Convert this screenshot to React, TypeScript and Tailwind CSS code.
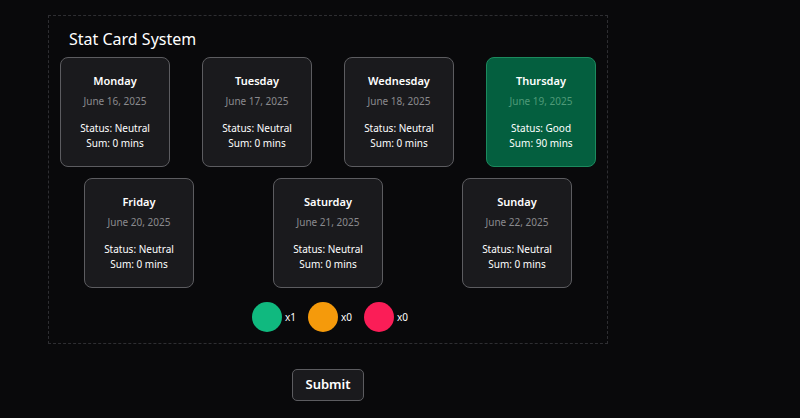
const days = [
  { name: "Monday", date: "June 16, 2025", status: "Neutral", sum: 0 },
  { name: "Tuesday", date: "June 17, 2025", status: "Neutral", sum: 0 },
  { name: "Wednesday", date: "June 18, 2025", status: "Neutral", sum: 0 },
  { name: "Thursday", date: "June 19, 2025", status: "Good", sum: 90 },
  { name: "Friday", date: "June 20, 2025", status: "Neutral", sum: 0 },
  { name: "Saturday", date: "June 21, 2025", status: "Neutral", sum: 0 },
  { name: "Sunday", date: "June 22, 2025", status: "Neutral", sum: 0 },
];

type Day = (typeof days)[number];

const StatCard = ({ day }: { day: Day }) => {
  const good = day.status === "Good";
  return (
    <div
      className={
        good
          ? "w-[110px] h-[110px] rounded-[8px] border border-[#1c8a5e] bg-[#045f3f] flex flex-col items-center pt-[15px] text-center"
          : "w-[110px] h-[110px] rounded-[8px] border border-[#5c5c60] bg-[#1a1a1d] flex flex-col items-center pt-[15px] text-center"
      }
    >
      <div className="text-[11px] font-semibold text-white leading-[16px]">{day.name}</div>
      <div className={good ? "text-[10px] text-[#4f9a78] mt-[4px] leading-[16px]" : "text-[10px] text-[#8a8a8e] mt-[4px] leading-[16px]"}>
        {day.date}
      </div>
      <div className="text-[10px] text-white mt-[12px] leading-[15px]">Status: {day.status}</div>
      <div className="text-[10px] text-white leading-[15px]">Sum: {day.sum} mins</div>
    </div>
  );
};

export default function App() {
  return (
    <div className="w-[800px] h-[418px] bg-[#09090b] font-['Noto_Sans',sans-serif] overflow-hidden">
      <div className="ml-[48px] pt-[15px] w-[560px] flex flex-col items-center">
        <div className="w-[560px] h-[329px] border border-dashed border-[#2e2e32] px-[11px] pt-[12px]">
          <h2 className="text-[16px] text-white leading-[22px] ml-[9px]">Stat Card System</h2>
          <div className="mt-[7px] flex justify-between">
            {days.slice(0, 4).map((d) => (
              <StatCard key={d.name} day={d} />
            ))}
          </div>
          <div className="mt-[11px] flex justify-between px-[24px]">
            {days.slice(4).map((d) => (
              <StatCard key={d.name} day={d} />
            ))}
          </div>
          <div className="mt-[14px] flex justify-center gap-[12px] pl-[4px]">
            {[
              { c: "bg-[#10b97f]", n: 1 },
              { c: "bg-[#f59a0b]", n: 0 },
              { c: "bg-[#fb1d57]", n: 0 },
            ].map((s, i) => (
              <div key={i} className="flex items-center gap-[3px]">
                <div className={`w-[30px] h-[30px] rounded-full ${s.c}`} />
                <span className="text-[10px] text-white">x{s.n}</span>
              </div>
            ))}
          </div>
        </div>
        <button className="mt-[25px] w-[72px] h-[32px] rounded-[5px] border border-[#5c5c60] bg-[#1a1a1d] text-white text-[13px] font-semibold">
          Submit
        </button>
      </div>
    </div>
  );
}
